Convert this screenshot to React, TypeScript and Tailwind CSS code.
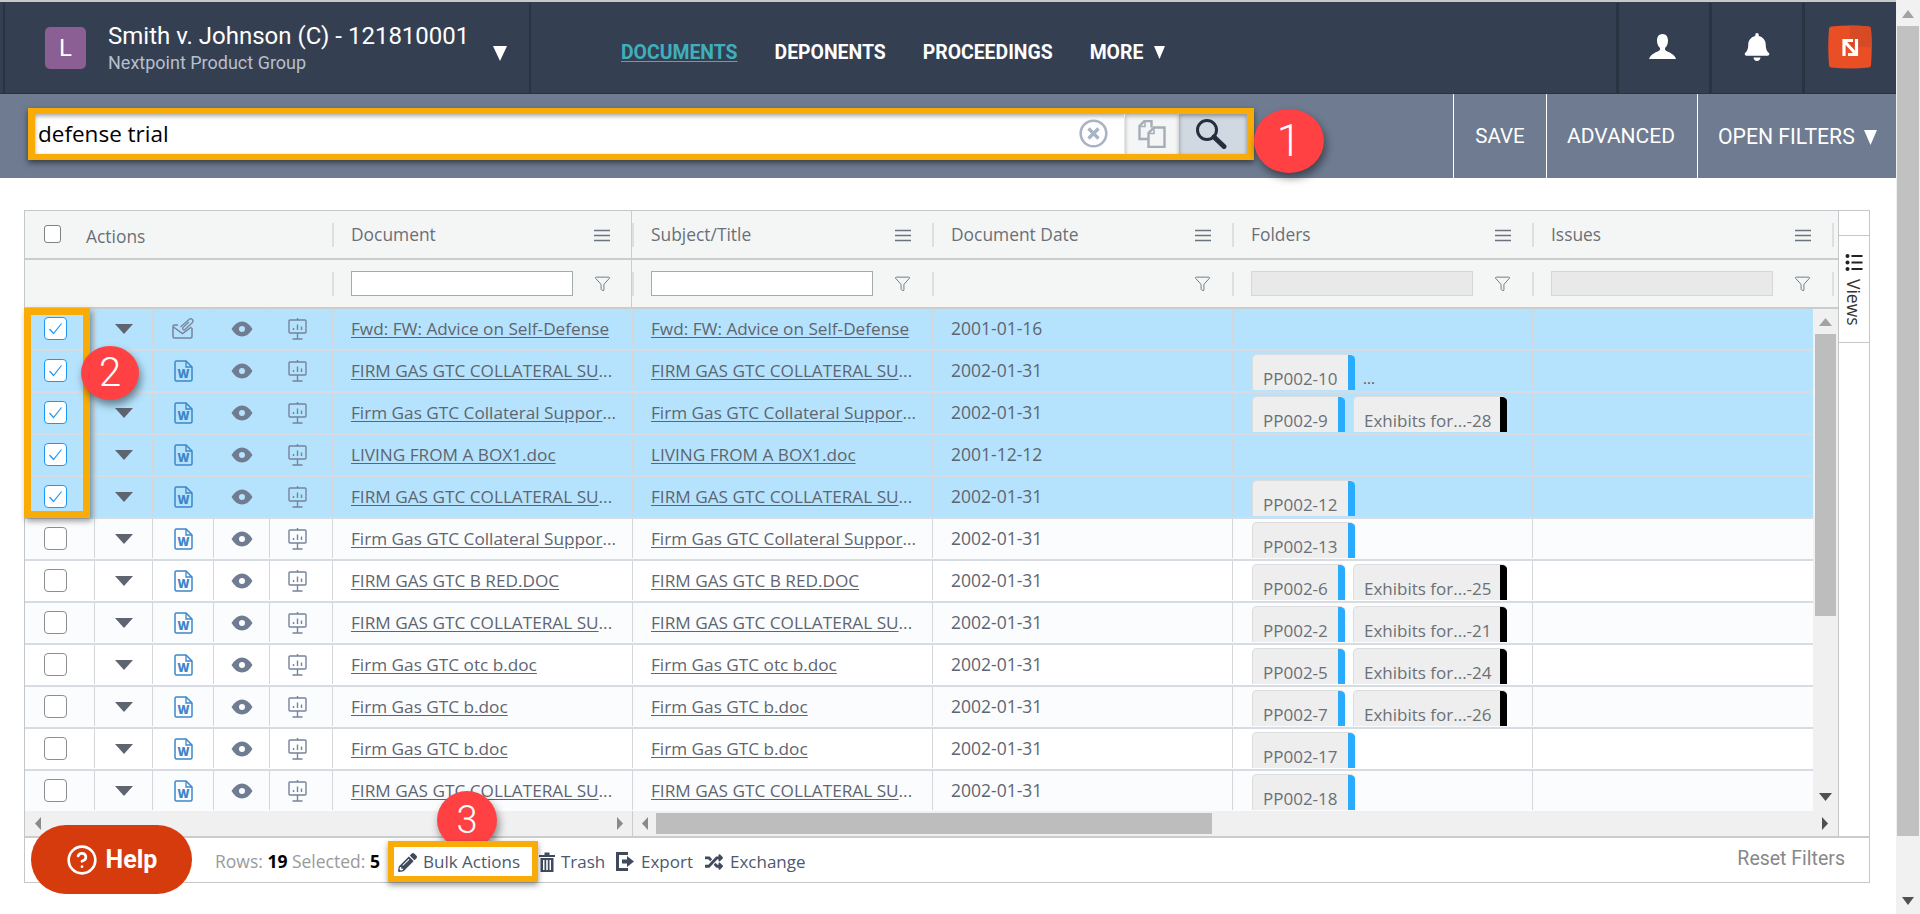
import { Funnel, CircleHelp } from 'lucide-react';
import { FaBell, FaPencilAlt, FaRandom } from 'react-icons/fa';

type Row = {
  doc: string;
  more?: boolean;
  date: string;
  email?: boolean;
  chips?: { label: string; width: string; black?: boolean }[];
  overflow?: boolean;
};

const GAS_UPPER = 'FIRM GAS GTC COLLATERAL SU';
const GAS_MIXED = 'Firm Gas GTC Collateral Suppor';

const rows: Row[] = [
  { doc: 'Fwd: FW: Advice on Self-Defense', date: '2001-01-16', email: true },
  { doc: GAS_UPPER, more: true, date: '2002-01-31', chips: [{ label: 'PP002-10', width: 'w-[103px]' }], overflow: true },
  {
    doc: GAS_MIXED,
    more: true,
    date: '2002-01-31',
    chips: [
      { label: 'PP002-9', width: 'w-[93px]' },
      { label: 'Exhibits for...-28', width: 'w-[154px]', black: true },
    ],
  },
  { doc: 'LIVING FROM A BOX1.doc', date: '2001-12-12' },
  { doc: GAS_UPPER, more: true, date: '2002-01-31', chips: [{ label: 'PP002-12', width: 'w-[103px]' }] },
  { doc: GAS_MIXED, more: true, date: '2002-01-31', chips: [{ label: 'PP002-13', width: 'w-[103px]' }] },
  {
    doc: 'FIRM GAS GTC B RED.DOC',
    date: '2002-01-31',
    chips: [
      { label: 'PP002-6', width: 'w-[93px]' },
      { label: 'Exhibits for...-25', width: 'w-[154px]', black: true },
    ],
  },
  {
    doc: GAS_UPPER,
    more: true,
    date: '2002-01-31',
    chips: [
      { label: 'PP002-2', width: 'w-[93px]' },
      { label: 'Exhibits for...-21', width: 'w-[154px]', black: true },
    ],
  },
  {
    doc: 'Firm Gas GTC otc b.doc',
    date: '2002-01-31',
    chips: [
      { label: 'PP002-5', width: 'w-[93px]' },
      { label: 'Exhibits for...-24', width: 'w-[154px]', black: true },
    ],
  },
  {
    doc: 'Firm Gas GTC b.doc',
    date: '2002-01-31',
    chips: [
      { label: 'PP002-7', width: 'w-[93px]' },
      { label: 'Exhibits for...-26', width: 'w-[154px]', black: true },
    ],
  },
  { doc: 'Firm Gas GTC b.doc', date: '2002-01-31', chips: [{ label: 'PP002-17', width: 'w-[103px]' }] },
  { doc: GAS_UPPER, more: true, date: '2002-01-31', chips: [{ label: 'PP002-18', width: 'w-[103px]' }] },
];

function Hamburger() {
  return (
    <svg width="16" height="13" viewBox="0 0 16 13" className="shrink-0">
      <path d="M0 1.5h16M0 6.5h16M0 11.5h16" stroke="#6b7280" strokeWidth="1.4" />
    </svg>
  );
}

function WordIcon() {
  return (
    <svg width="19" height="22" viewBox="0 0 19 22">
      <path d="M1 2.5A1.5 1.5 0 0 1 2.500 1H12l6 6v12.500a1.500 1.500 0 0 1-1.500 1.500h-14A1.500 1.500 0 0 1 1 19.500z" fill="none" stroke="#3d86c9" strokeWidth="1.500" />
      <path d="M12 1v6h6" fill="none" stroke="#3d86c9" strokeWidth="1.300" />
      <text x="9.500" y="18" textAnchor="middle" fontSize="11.500" fontWeight="800" fill="#3d86c9" fontFamily="'Open Sans', sans-serif">W</text>
    </svg>
  );
}

function MailIcon() {
  return (
    <svg width="23" height="23" viewBox="0 0 23 23" fill="none" stroke="#76839a" strokeWidth="1.500">
      <path d="M6 8H2.500A1.500 1.500 0 0 0 1 9.500v10A1.500 1.500 0 0 0 2.500 21h16a1.500 1.500 0 0 0 1.500-1.500V11" />
      <path d="M1.500 10l9 6.500 9-6.500" />
      <path d="M8.500 10l8.500-7.500a2.300 2.300 0 0 1 3.300 3.300L13 12.500a1.300 1.300 0 0 1-2-2l6-5.500" strokeWidth="1.200" />
    </svg>
  );
}

function EyeIcon() {
  return (
    <svg width="22" height="16" viewBox="0 0 22 16">
      <path fillRule="evenodd" fill="#6f7c91" d="M0.500 8C3.500 3 7 0.500 11 0.500S18.500 3 21.500 8C18.500 13 15 15.500 11 15.500S3.500 13 0.500 8zM11 5a3 3 0 1 0 0 6 3 3 0 0 0 0-6z" />
    </svg>
  );
}

function BoardIcon() {
  return (
    <svg width="19" height="22" viewBox="0 0 19 22" fill="none" stroke="#76839a" strokeWidth="1.400">
      <path d="M9.500 0v2M9.500 15v6M4.500 21h10" />
      <rect x="1" y="2" width="17" height="13" rx="1" />
      <path d="M5.500 12v-2M9.500 12V6.500M13.500 12V8.500" />
    </svg>
  );
}

function Checkbox({ checked }: { checked: boolean }) {
  return (
    <div className={`flex h-[23px] w-[23px] items-center justify-center rounded-[4px] border bg-white ${checked ? 'border-[#2196f3]' : 'border-[#8a8f94]'}`}>
      {checked && (
        <svg width="15" height="13" viewBox="0 0 15 13" fill="none">
          <path d="M1.500 7l4 4.500L13.500 1.500" stroke="#2196f3" strokeWidth="1.200" />
        </svg>
      )}
    </div>
  );
}

function Chip({ label, width, black }: { label: string; width: string; black?: boolean }) {
  return (
    <div className={`flex h-[36px] ${width} shrink-0 overflow-hidden rounded-t-[5px] border-l border-t border-[#dcdcdc] bg-[#eeeeee]`}>
      <span className="flex-1 whitespace-nowrap pl-[10px] pt-[12px] text-[17px] leading-[24px] text-[#6a7078]">{label}</span>
      <span className={`w-[7px] shrink-0 ${black ? 'bg-black' : 'bg-[#29abff]'}`} />
    </div>
  );
}

function HeaderCell({ title, className = '' }: { title: string; className?: string }) {
  return (
    <div className={`flex h-full w-[300px] items-center ${className}`}>
      <div className="h-[24px] w-[2px] bg-[#dde0e0]" />
      <span className="ml-[17px] flex-1 text-[17.400px] text-[#6b6f76]">{title}</span>
      <div className="mr-[21px] pt-[2px]"><Hamburger /></div>
    </div>
  );
}

function FilterCell({ kind, className = '' }: { kind: 'text' | 'none' | 'disabled'; className?: string }) {
  return (
    <div className={`flex h-full w-[300px] items-center ${className}`}>
      <div className="h-[24px] w-[2px] bg-[#dde0e0]" />
      {kind === 'none' ? (
        <div className="ml-[17px] h-[25px] w-[222px]" />
      ) : (
        <div className={`ml-[17px] h-[25px] w-[222px] border ${kind === 'text' ? 'border-[#a3aaaa] bg-white' : 'border-[#d5d7d7] bg-[#e9e9e9]'}`} />
      )}
      <Funnel size={17} strokeWidth={1.300} className="ml-[21px] text-[#687180]" />
    </div>
  );
}

function BodyCell({ className, children }: { className: string; children?: React.ReactNode }) {
  return <div className={`flex h-[39px] shrink-0 items-center border-r border-[#d3d7da] ${className}`}>{children}</div>;
}

function DocLink({ text, more }: { text: string; more?: boolean }) {
  return (
    <span className="whitespace-nowrap pl-[18px] text-[17.200px] text-[#5f6570]">
      <span className="underline underline-offset-2">{text}</span>
      {more && '...'}
    </span>
  );
}

function TableRow({ row, index }: { row: Row; index: number }) {
  const selected = index < 5;
  const bg = selected ? 'bg-[#b5e3fd]' : index % 2 === 1 ? 'bg-[#fbfcfe]' : 'bg-white';
  return (
    <div className={`flex h-[42px] shrink-0 items-start border-b-2 border-[#d6dce1] ${bg}`}>
      <BodyCell className="w-[69px] border-r-0 pl-[19px]">
        <Checkbox checked={selected} />
      </BodyCell>
      <BodyCell className="w-[59px] justify-center border-l">
        <svg width="18" height="10" viewBox="0 0 18 10"><path d="M0 0h18L9 10z" fill="#5e6570" /></svg>
      </BodyCell>
      <BodyCell className="w-[61px] justify-center">{row.email ? <MailIcon /> : <WordIcon />}</BodyCell>
      <BodyCell className="w-[56px] justify-center"><EyeIcon /></BodyCell>
      <BodyCell className="w-[63px] justify-center pr-[7px]"><BoardIcon /></BodyCell>
      <BodyCell className="w-[300px]"><DocLink text={row.doc} more={row.more} /></BodyCell>
      <BodyCell className="w-[300px]"><DocLink text={row.doc} more={row.more} /></BodyCell>
      <BodyCell className="w-[300px] pl-[18px] text-[17.500px] text-[#5f6570]">{row.date}</BodyCell>
      <div className="flex h-[39px] w-[300px] shrink-0 items-start gap-[8px] border-r border-[#d3d7da] pl-[19px] pt-[3px]">
        {row.chips?.map((chip) => <Chip key={chip.label} {...chip} />)}
        {row.overflow && <span className="self-end pb-[1px] text-[15px] leading-[22px] text-[#555]">...</span>}
      </div>
    </div>
  );
}

function TriangleLeft() {
  return <svg width="6" height="13" viewBox="0 0 6 13"><path d="M6 0v13L0 6.500z" fill="#8a8a8a" /></svg>;
}

function TriangleRight({ dark }: { dark?: boolean }) {
  return <svg width="6" height="13" viewBox="0 0 6 13"><path d="M0 0v13l6-6.500z" fill={dark ? '#505050' : '#8a8a8a'} /></svg>;
}

function Badge({ n, className }: { n: number; className: string }) {
  return (
    <div className={`absolute flex items-center justify-center rounded-[50%] bg-[#ff4144] font-['Roboto'] font-light text-white shadow-[2px_5px_8px_rgba(0,0,0,0.45)] ${className}`}>
      {n}
    </div>
  );
}

export default function App() {
  return (
    <div className="relative flex h-[914px] w-[1920px] overflow-hidden bg-white font-['Open_Sans',sans-serif]">
      <div className="flex w-[1896px] flex-col">
        {/* top bar */}
        <div className="h-[2px] bg-[#c8c9cb]" />
        <header className="flex h-[92px] items-stretch border-b border-[#2a3342] bg-[#353f52] pt-[1px] font-['Roboto',sans-serif]">
          <div className="ml-[3px] flex w-[528px] items-center border-x-2 border-[#2a3342] pl-[40px]">
            <div className="flex h-[42px] w-[41px] items-center justify-center rounded-[5px] bg-[#8b5f94] pb-[1px] text-[24px] text-white">L</div>
            <div className="ml-[22px] pb-[2px]">
              <div className="whitespace-nowrap text-[24px] leading-[30px] text-white">Smith v. Johnson (C) - 121810001</div>
              <div className="mt-[1px] whitespace-nowrap text-[18px] leading-[22px] text-[#b6bfcb]">Nextpoint Product Group</div>
            </div>
            <svg width="14" height="15" viewBox="0 0 14 15" className="ml-[24px] mt-[10px]"><path d="M0 0h14L7 15z" fill="#fff" /></svg>
          </div>
          <nav className="flex items-center gap-[37px] pl-[90px] pt-[10px] text-[19.400px] font-bold text-white">
            <span className="text-[#3fb0bb] underline underline-offset-2">DOCUMENTS</span>
            <span>DEPONENTS</span>
            <span>PROCEEDINGS</span>
            <span className="flex items-center gap-[11px]">
              MORE
              <svg width="11" height="13" viewBox="0 0 11 13"><path d="M0 0h11L5.500 13z" fill="#fff" /></svg>
            </span>
          </nav>
          <div className="ml-auto flex">
            <div className="flex w-[93px] items-center justify-center border-l-[3px] border-[#2a3342] pb-[4px] pr-[4px]">
              <svg width="27" height="25" viewBox="0 0 27 25">
                <path fill="#fff" d="M13.500 0c3.500 0 5.500 2.800 5.500 6.500 0 3-1 5.500-3 7.500v1.500c0 2 9 3 11 9.500H0c2-6.500 11-7.500 11-9.500V14C9 12 8 9.500 8 6.500 8 2.800 10 0 13.500 0z" />
              </svg>
            </div>
            <div className="flex w-[93px] items-center justify-center border-l-[3px] border-[#2a3342] pb-[2px] text-white">
              <FaBell size={28} />
            </div>
            <div className="flex w-[94px] items-center justify-center border-l-[3px] border-[#2a3342] pb-[2px] pr-[2px]">
              <svg width="44" height="44" viewBox="0 0 44 44">
                <path d="M3 1.500Q22 -0.500 41 1.500Q43 2 43 4Q44.500 22 43 40Q43 42 41 42.500Q22 44.500 3 42.500Q1 42 1 40Q-0.500 22 1 4Q1 2 3 1.500z" fill="#ea4e25" />
                <path d="M22 0.500Q32 0.500 41 1.500Q43 2 43 4Q43.800 13 43.700 22H22z" fill="#d64a26" />
                <path d="M16 31V15.500H25M17 17L28 29M28.500 14V29.500H20" fill="none" stroke="#fff" strokeWidth="3.200" />
              </svg>
            </div>
          </div>
        </header>

        {/* search toolbar */}
        <div className="flex h-[84px] items-start bg-[#6e7b91] font-['Roboto',sans-serif]">
          <div className="ml-[28px] mt-[14px] flex h-[52px] w-[1226px] items-stretch border-x-[7px] border-y-[6px] border-[#f9ab07] bg-white shadow-[0_3px_6px_rgba(0,0,0,0.5),inset_0_2px_4px_rgba(0,0,0,0.35)]">
            <span className="flex flex-1 items-center pb-[1px] pl-[3px] font-['Open_Sans'] text-[22.500px] text-black">defense trial</span>
            <div className="flex w-[62px] items-center justify-center pb-[1px]">
              <svg width="29" height="29" viewBox="0 0 29 29" fill="none" stroke="#a9b3c3">
                <circle cx="14.500" cy="14.500" r="12.800" strokeWidth="2.600" />
                <path d="M9.500 9.500l10 10M19.500 9.500l-10 10" strokeWidth="3.400" />
              </svg>
            </div>
            <div className="flex w-[55px] items-center justify-center border-l border-[#e4e6e8] bg-[#f4f5f5] shadow-[inset_0_2px_4px_rgba(0,0,0,0.3)]">
              <svg width="28" height="28" viewBox="0 0 28 28" fill="none" stroke="#a5adb8" strokeWidth="2.400">
                <path d="M10 19H1.500V6l5-5h7v6.500" />
                <path d="M7 1v5.500H1.500" strokeWidth="1.500" />
                <path d="M10.500 27V13l5.500-5.500h10.500V27z" fill="#f4f5f5" />
                <path d="M16 8v5.500h-5.500" strokeWidth="1.500" />
              </svg>
            </div>
            <div className="flex w-[68px] items-center justify-center bg-[#d0d9e1] pr-[5px] shadow-[inset_0_2px_4px_rgba(0,0,0,0.35)]">
              <svg width="32" height="30" viewBox="0 0 32 30" fill="none" stroke="#252e3f">
                <circle cx="12" cy="11" r="9.500" strokeWidth="3" />
                <path d="M19 18l10 9.500" strokeWidth="5" strokeLinecap="round" />
              </svg>
            </div>
          </div>
          <div className="ml-auto flex h-full text-white">
            <div className="flex w-[93px] items-center justify-center border-l border-white pt-[1px] text-[20.500px]">SAVE</div>
            <div className="flex w-[151px] items-center justify-center border-l border-white pr-[2px] pt-[2px] text-[21px]">ADVANCED</div>
            <div className="flex w-[199px] items-center gap-[9px] border-l border-white pl-[20px] pt-[2px] text-[21.200px]">
              OPEN FILTERS
              <svg width="13" height="15" viewBox="0 0 13 15"><path d="M0 0h13L6.500 15z" fill="#fff" /></svg>
            </div>
          </div>
        </div>

        {/* grid */}
        <div className="ml-[24px] mt-[32px] flex h-[673px] w-[1846px] flex-col border border-[#c3c7c9]">
          <div className="flex h-[625px]">
            <div className="flex w-[1813px] flex-col">
              <div className="flex h-[49px] shrink-0 items-center border-b-2 border-[#c9cdce] bg-[#f4f6f6]">
                <div className="flex w-[307px] shrink-0 items-center pl-[19px]">
                  <div className="h-[18px] w-[17px] rounded-[3px] border border-[#7e8286] bg-white" />
                  <span className="ml-[25px] pt-[3px] text-[17.400px] text-[#6b6f76]">Actions</span>
                </div>
                <HeaderCell title="Document" className="border-r border-[#c9cdce]" />
                <HeaderCell title="Subject/Title" />
                <HeaderCell title="Document Date" />
                <HeaderCell title="Folders" />
                <HeaderCell title="Issues" />
                <div className="h-[24px] w-[2px] bg-[#dde0e0]" />
              </div>
              <div className="flex h-[49px] shrink-0 items-center border-b-2 border-[#c9cdce] bg-[#f4f6f6]">
                <div className="w-[307px] shrink-0" />
                <FilterCell kind="text" className="border-r border-[#c9cdce]" />
                <FilterCell kind="text" />
                <FilterCell kind="none" />
                <FilterCell kind="disabled" />
                <FilterCell kind="disabled" />
                <div className="h-[24px] w-[2px] bg-[#dde0e0]" />
              </div>
              <div className="flex h-[502px] overflow-hidden">
                <div className="flex w-[1788px] shrink-0 flex-col overflow-hidden">
                  {rows.map((row, i) => <TableRow key={i} row={row} index={i} />)}
                </div>
                <div className="flex w-[25px] shrink-0 flex-col items-center bg-[#f0f0f0]">
                  <svg width="13" height="8" viewBox="0 0 13 8" className="mt-[9px]"><path d="M0 8h13L6.500 0z" fill="#a3a3a3" /></svg>
                  <div className="mt-[8px] h-[282px] w-[21px] bg-[#bdbdbd]" />
                  <svg width="13" height="8" viewBox="0 0 13 8" className="mt-auto mb-[10px]"><path d="M0 0h13L6.500 8z" fill="#505050" /></svg>
                </div>
              </div>
              <div className="flex h-[25px] shrink-0 items-center bg-[#f0f0f0]">
                <div className="flex h-full w-[608px] shrink-0 items-center justify-between border-r border-[#c9cdce] pl-[10px] pr-[9px]">
                  <TriangleLeft />
                  <TriangleRight />
                </div>
                <div className="ml-[9px]"><TriangleLeft /></div>
                <div className="ml-[8px] h-[21px] w-[556px] bg-[#bdbdbd]" />
                <div className="ml-auto mr-[10px]"><TriangleRight dark /></div>
              </div>
            </div>
            <div className="flex w-[32px] flex-col border-l border-[#c3c7c9] bg-white">
              <div className="h-[25px] border-b border-[#c3c7c9]" />
              <div className="flex h-[107px] flex-col items-center border-b border-[#c3c7c9] pt-[17px]">
                <svg width="18" height="18" viewBox="0 0 18 18" fill="#222">
                  <circle cx="2.500" cy="3" r="2" />
                  <circle cx="2.500" cy="9.500" r="2" />
                  <circle cx="2.500" cy="16" r="2" />
                  <rect x="6.500" y="2" width="11" height="2" />
                  <rect x="6.500" y="8.500" width="11" height="2" />
                  <rect x="6.500" y="15" width="11" height="2" />
                </svg>
                <span className="mt-[8px] text-[17.500px] leading-[20px] text-[#333] [writing-mode:vertical-rl]">Views</span>
              </div>
            </div>
          </div>

          <footer className="flex h-[46px] items-center border-t-2 border-[#c9cdce]">
            <div className="ml-[190px] w-[173px] whitespace-nowrap pt-[3px] text-[17.500px] text-[#9a9a9a]">
              Rows: <b className="text-black">19</b> Selected: <b className="text-black">5</b>
            </div>
            <div className="relative z-10 mt-[2px] flex h-[41px] w-[150px] items-center gap-[6px] whitespace-nowrap border-[6px] border-[#f9ab07] bg-white pl-[4px] pt-[2px] text-[17px] text-[#4d5870] shadow-[0_3px_6px_rgba(0,0,0,0.4)]">
              <FaPencilAlt size={19} className="text-[#3f4a5c]" />
              Bulk Actions
            </div>
            <div className="ml-[1px] flex w-[77px] items-center gap-[6px] pt-[3px] text-[17px] text-[#4d5870]">
              <svg width="16" height="20" viewBox="0 0 16 20">
                <path d="M0 3h5.500V0.500h5V3H16v2H0z" fill="#3f4a5c" />
                <path fillRule="evenodd" d="M1.500 6h13v14h-13zM4 8v10h1.500V8zM7.200 8v10h1.600V8zM10.500 8v10H12V8z" fill="#3f4a5c" />
              </svg>
              Trash
            </div>
            <div className="flex w-[89px] items-center gap-[7px] pt-[3px] text-[17px] text-[#4d5870]">
              <svg width="18" height="19" viewBox="0 0 18 19" fill="#3f4a5c">
                <path d="M0 0h12v3H3v13h9v3H0z" />
                <path d="M6 7.500h5V4l7 5.500-7 5.500v-3.500H6z" />
              </svg>
              Export
            </div>
            <div className="flex items-center gap-[7px] pt-[3px] text-[17px] text-[#4d5870]">
              <FaRandom size={18} className="text-[#3f4a5c]" />
              Exchange
            </div>
            <span className="ml-auto mr-[24px] pb-[2px] font-['Roboto'] text-[19.500px] text-[#888]">Reset Filters</span>
          </footer>
        </div>
      </div>

      {/* page scrollbar */}
      <div className="flex w-[24px] flex-col items-center bg-[#f1f1f1]">
        <svg width="12" height="8" viewBox="0 0 12 8" className="mt-[10px]"><path d="M0 8h12L6 0z" fill="#a3a3a3" /></svg>
        <div className="mt-[8px] h-[810px] w-[22px] bg-[#c1c1c1]" />
        <svg width="12" height="8" viewBox="0 0 12 8" className="mt-auto mb-[9px]"><path d="M0 0h12L6 8z" fill="#505050" /></svg>
      </div>

      {/* annotations */}
      <div className="absolute left-[24px] top-[308px] h-[210px] w-[66px] border-[7px] border-[#f9ab07] shadow-[2px_3px_6px_rgba(0,0,0,0.4)]" />
      <Badge n={1} className="left-[1254px] top-[109px] h-[64px] w-[70px] text-[44px]" />
      <Badge n={2} className="left-[81px] top-[346px] h-[54px] w-[58px] text-[40px]" />
      <Badge n={3} className="left-[437px] top-[791px] h-[58px] w-[60px] text-[38px]" />
      <div className="absolute left-[31px] top-[825px] flex h-[69px] w-[161px] items-center justify-center gap-[8px] rounded-full bg-[#d63b0e] font-['Roboto'] text-[25px] font-bold text-white">
        <CircleHelp size={32} strokeWidth={2} />
        Help
      </div>
    </div>
  );
}
